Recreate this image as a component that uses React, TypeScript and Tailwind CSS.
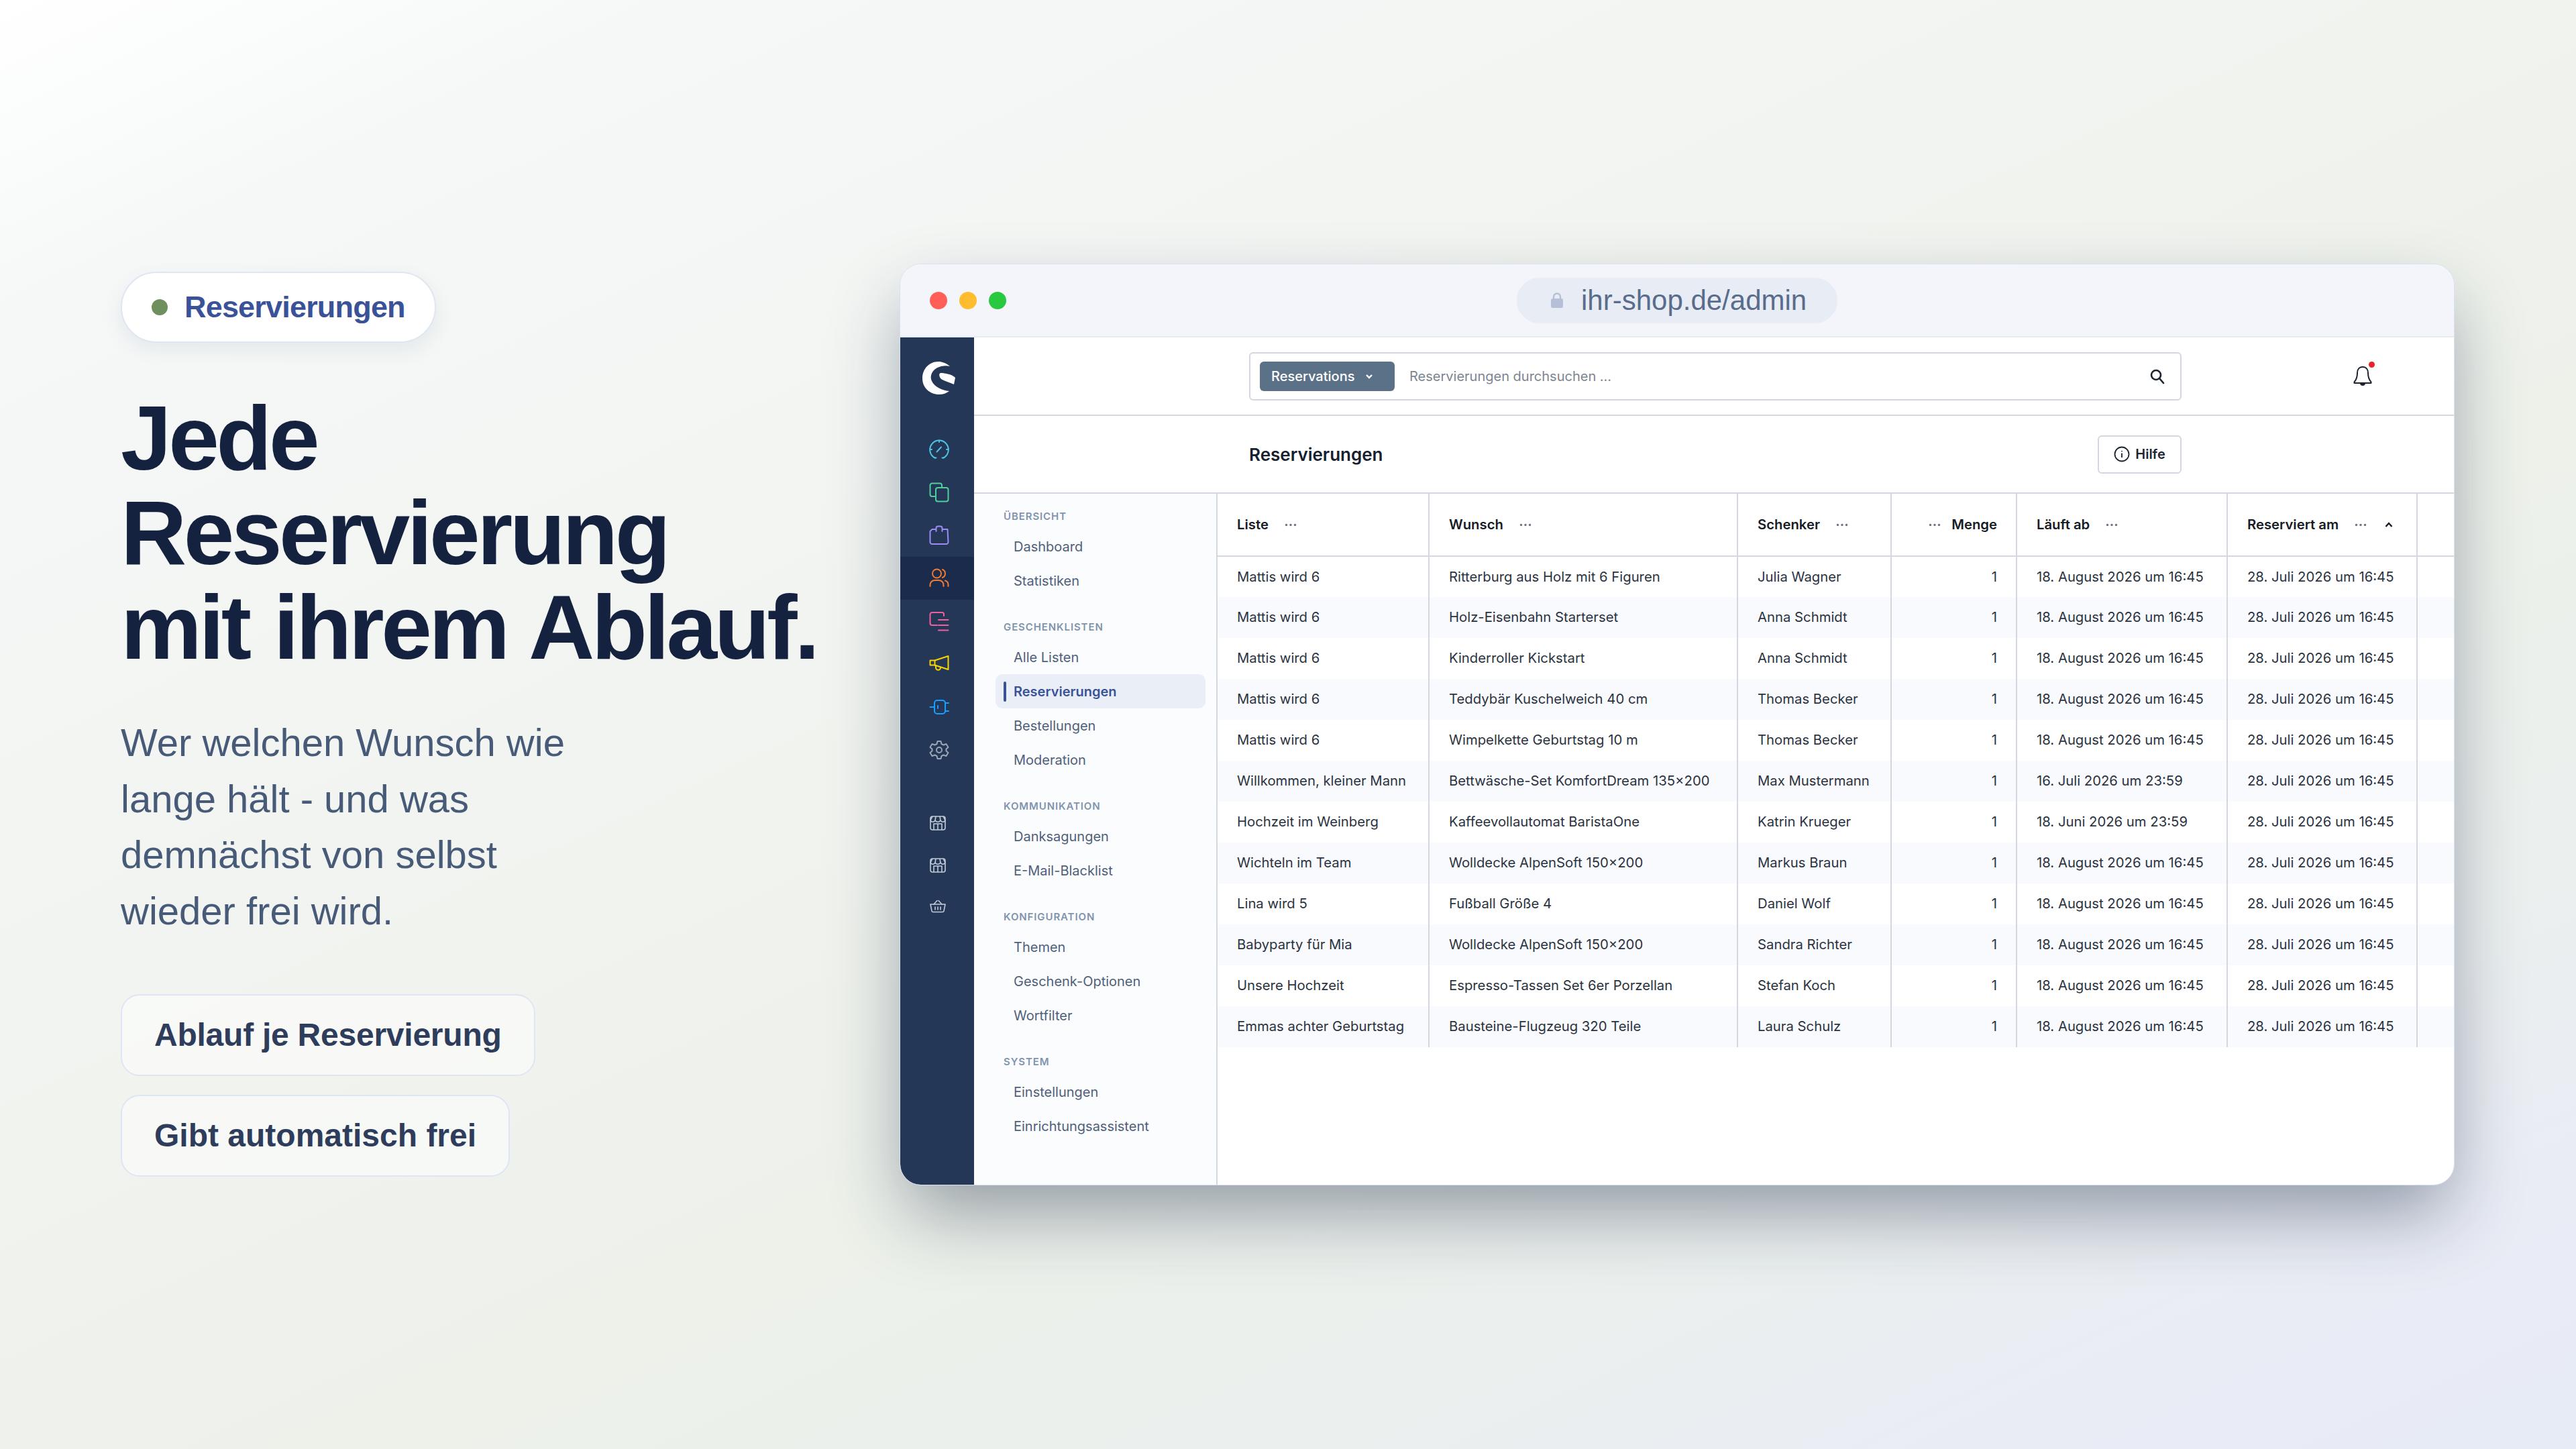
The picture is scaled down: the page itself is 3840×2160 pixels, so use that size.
import React from "react";

const sans = "font-['Liberation_Sans',Arial,sans-serif]";

const rows = [
  ["Mattis wird 6", "Ritterburg aus Holz mit 6 Figuren", "Julia Wagner", "18. August 2026 um 16:45"],
  ["Mattis wird 6", "Holz-Eisenbahn Starterset", "Anna Schmidt", "18. August 2026 um 16:45"],
  ["Mattis wird 6", "Kinderroller Kickstart", "Anna Schmidt", "18. August 2026 um 16:45"],
  ["Mattis wird 6", "Teddybär Kuschelweich 40 cm", "Thomas Becker", "18. August 2026 um 16:45"],
  ["Mattis wird 6", "Wimpelkette Geburtstag 10 m", "Thomas Becker", "18. August 2026 um 16:45"],
  ["Willkommen, kleiner Mann", "Bettwäsche-Set KomfortDream 135×200", "Max Mustermann", "16. Juli 2026 um 23:59"],
  ["Hochzeit im Weinberg", "Kaffeevollautomat BaristaOne", "Katrin Krueger", "18. Juni 2026 um 23:59"],
  ["Wichteln im Team", "Wolldecke AlpenSoft 150×200", "Markus Braun", "18. August 2026 um 16:45"],
  ["Lina wird 5", "Fußball Größe 4", "Daniel Wolf", "18. August 2026 um 16:45"],
  ["Babyparty für Mia", "Wolldecke AlpenSoft 150×200", "Sandra Richter", "18. August 2026 um 16:45"],
  ["Unsere Hochzeit", "Espresso-Tassen Set 6er Porzellan", "Stefan Koch", "18. August 2026 um 16:45"],
  ["Emmas achter Geburtstag", "Bausteine-Flugzeug 320 Teile", "Laura Schulz", "18. August 2026 um 16:45"],
];

const navGroups = [
  { title: "Übersicht", items: ["Dashboard", "Statistiken"] },
  { title: "Geschenklisten", items: ["Alle Listen", "Reservierungen", "Bestellungen", "Moderation"] },
  { title: "Kommunikation", items: ["Danksagungen", "E-Mail-Blacklist"] },
  { title: "Konfiguration", items: ["Themen", "Geschenk-Optionen", "Wortfilter"] },
  { title: "System", items: ["Einstellungen", "Einrichtungsassistent"] },
];

function Icon({ color, children }: { color: string; children: React.ReactNode }) {
  return (
    <svg width="30" height="30" viewBox="0 0 30 30" fill="none" stroke={color} strokeWidth="2" strokeLinecap="round" strokeLinejoin="round">
      {children}
    </svg>
  );
}

const railIcons = [
  <Icon color="#4fc3e0">
    <path d="M8.5 27.5A13.8 13.8 0 1 1 21.5 27.5" />
    <path d="M10.5 27.5H8.5M21.5 27.5H19.5M15 1.5V4M1.5 15H4M26 15H28.5M11.5 18.5L18 11.5" />
  </Icon>,
  <Icon color="#4fd09b">
    <path d="M9 21H4.5A3 3 0 0 1 1.5 18V4.5A3 3 0 0 1 4.5 1.5H16A3 3 0 0 1 19 4.5V8" />
    <rect x="10" y="8" width="18.5" height="20.5" rx="3" />
  </Icon>,
  <Icon color="#a08bf5">
    <path d="M10 6H4.5L1.5 9V25A3 3 0 0 0 4.5 28H25.5A3 3 0 0 0 28.5 25L27.5 6H20" />
    <path d="M10.5 9V4.5A3 3 0 0 1 13.5 1.5H16.5A3 3 0 0 1 19.5 4.5V9" />
  </Icon>,
  <Icon color="#f27a30">
    <circle cx="11.5" cy="8" r="6.5" />
    <path d="M1.5 27V25A7 7 0 0 1 8.5 18H14.5A7 7 0 0 1 21.5 25V27" />
    <path d="M20 2A6.5 6.5 0 0 1 20 14M24 18.5A6.5 6.5 0 0 1 28.5 25V27" />
  </Icon>,
  <Icon color="#f0609e">
    <path d="M22 7V4.5A2.5 2.5 0 0 0 19.5 2H4.5A3 3 0 0 0 1.5 5V18A3 3 0 0 0 4.5 21H12" />
    <path d="M14 13H28.5M14 21H28.5M14 28.5H28.5" />
  </Icon>,
  <Icon color="#f8d400">
    <path d="M8.5 9.5H1.5V16.5H8.5L28.5 23V3Z" />
    <path d="M8.5 9.5V16.5M10 17.5V20A3.5 3.5 0 0 0 17 20.5" />
  </Icon>,
  <Icon color="#189eff">
    <rect x="8" y="5" width="16" height="20" rx="4" />
    <path d="M1.5 15H8M24 9H29M24 21H29M13 13V17" />
  </Icon>,
  <Icon color="#9aa6b5">
    <circle cx="15" cy="15" r="4" />
    <path d="M12.5 2H17.5L18.5 6L21.5 7.5L25.5 6L28.5 11L25.5 13.5V16.5L28.5 19L25.5 24L21.5 22.5L18.5 24L17.5 28H12.5L11.5 24L8.5 22.5L4.5 24L1.5 19L4.5 16.5V13.5L1.5 11L4.5 6L8.5 7.5L11.5 6Z" />
  </Icon>,
];

function Store() {
  return (
    <svg width="24" height="24" viewBox="0 0 24 24" fill="none" stroke="#c3cbd6" strokeWidth="1.6" strokeLinejoin="round">
      <rect x="1" y="2" width="22" height="20" rx="3" />
      <path d="M1 8C3 11 6 11 8 8C10 11 14 11 16 8C18 11 21 11 23 8M4 2L1 8M20 2L23 8M8 8L9 2M16 8L15 2" />
      <path d="M6 22V13H18V22M12 13V22" />
    </svg>
  );
}

function Basket() {
  return (
    <svg width="24" height="20" viewBox="0 0 24 20" fill="none" stroke="#c3cbd6" strokeWidth="1.6" strokeLinejoin="round" strokeLinecap="round">
      <path d="M1 7H23L21 17A2 2 0 0 1 19 18.5H5A2 2 0 0 1 3 17Z" />
      <path d="M6 7L11 1.5M18 7L13 1.5M8 11V15M12 11V15M16 11V15" />
    </svg>
  );
}

function Dots() {
  return (
    <svg width="18" height="5" viewBox="0 0 18 5" fill="#6b7280" className="shrink-0">
      <circle cx="2.5" cy="2.5" r="1.7" />
      <circle cx="9" cy="2.5" r="1.7" />
      <circle cx="15.5" cy="2.5" r="1.7" />
    </svg>
  );
}

function Rail() {
  return (
    <div className="w-[110px] shrink-0 bg-[#243757] rounded-bl-[30px] flex flex-col items-center">
      <div className="h-[135px] w-full pt-[36px] pl-[6px] flex justify-center">
        <svg width="50" height="50" viewBox="0 0 50 50" fill="#fff">
          <path d="M41 7C35 2 29 0 24 0C10 0 0 11 0 25C0 39 11 49 25 49C31 49 36 47 40 44C30 43 18 38 14 29C10 20 16 10 28 7C33 6 37 6 41 7Z" />
          <path d="M27 17C34 17 44 19 49 24L47 34C41 31 32 29 28 26C25 23 24 18 27 17Z" />
        </svg>
      </div>
      {railIcons.map((icon, i) => (
        <div key={i} className={`w-full h-[64px] pl-[6px] flex items-center justify-center ${i === 3 ? "bg-[#1b2b4b]" : ""}`}>
          {icon}
        </div>
      ))}
      <div className="w-full pl-[44px] pt-[65px] flex flex-col gap-[39px]">
        <Store />
        <Store />
        <Basket />
      </div>
    </div>
  );
}

function SideNav() {
  return (
    <div className="w-[363px] shrink-0 bg-[#fbfcfe] border-r-2 border-[#d4d7df] pt-[23px] pl-[32px] pr-[16px]">
      {navGroups.map((group) => (
        <div key={group.title} className="mb-[33px]">
          <div className="h-[20px] mb-[10px] ml-[12px] flex items-center text-[15px] leading-none font-semibold uppercase tracking-[0.06em] text-[#7f94ad]">
            {group.title}
          </div>
          {group.items.map((item) =>
            item === "Reservierungen" ? (
              <div key={item} className="h-[51px] rounded-[10px] bg-[#eaeff7] pl-[12px] flex items-center text-[20px] font-semibold text-[#3a5298]">
                <span className="w-[4px] h-[30px] rounded-full bg-[#3a5298] mr-[11px]" />
                {item}
              </div>
            ) : (
              <div key={item} className="h-[51px] pl-[27px] flex items-center text-[20px] text-[#4f607a]">
                {item}
              </div>
            ),
          )}
        </div>
      ))}
    </div>
  );
}

function Table() {
  const head = "h-[93px] border-b-2 border-r-2 border-[#d4d7df] pl-[29px] pr-[28px] text-left font-semibold";
  const cell = "h-[61px] border-r-2 border-[#d4d7df] pl-[29px] pr-[28px] whitespace-nowrap";
  return (
    <table className="w-full table-fixed border-collapse text-[20.3px] text-[#2b3340]">
      <colgroup>
        <col className="w-[315px]" />
        <col className="w-[460px]" />
        <col className="w-[229px]" />
        <col className="w-[187px]" />
        <col className="w-[314px]" />
        <col className="w-[283px]" />
        <col />
      </colgroup>
      <thead>
        <tr className="text-[#171c26]">
          <th className={head}>
            <span className="flex items-center gap-[24px]">Liste <Dots /></span>
          </th>
          <th className={head}>
            <span className="flex items-center gap-[24px]">Wunsch <Dots /></span>
          </th>
          <th className={head}>
            <span className="flex items-center gap-[24px]">Schenker <Dots /></span>
          </th>
          <th className={head}>
            <span className="flex items-center justify-end gap-[16px]"><Dots /> Menge</span>
          </th>
          <th className={head}>
            <span className="flex items-center gap-[24px]">Läuft ab <Dots /></span>
          </th>
          <th className={head}>
            <span className="flex items-center gap-[24px]">
              Reserviert am <Dots />
              <svg width="12" height="8" viewBox="0 0 12 8" fill="none" stroke="#171c26" strokeWidth="2.4" className="ml-[3px]">
                <path d="M1.5 7L6 2L10.5 7" />
              </svg>
            </span>
          </th>
          <th className="border-b-2 border-[#d4d7df]" />
        </tr>
      </thead>
      <tbody>
        {rows.map((row, i) => (
          <tr key={i} className={i % 2 === 1 ? "bg-[#f9fafe]" : "bg-white"}>
            <td className={cell}>{row[0]}</td>
            <td className={cell}>{row[1]}</td>
            <td className={cell}>{row[2]}</td>
            <td className={`${cell} text-right`}>1</td>
            <td className={cell}>{row[3]}</td>
            <td className={cell}>28. Juli 2026 um 16:45</td>
            <td />
          </tr>
        ))}
      </tbody>
    </table>
  );
}

function AdminWindow() {
  return (
    <div className="w-[2318px] h-[1374px] flex flex-col rounded-[32px] border border-[#d9e1f1] bg-white overflow-hidden font-['Inter',sans-serif] shadow-[0_50px_110px_-10px_rgba(20,35,65,0.42)]">
      {/* browser bar */}
      <div className="h-[109px] shrink-0 bg-[#f3f5fa] border-b-2 border-[#e6eaf3] flex items-center pl-[44px]">
        <div className="flex gap-[18px] w-[875px] shrink-0">
          <span className="w-[26px] h-[26px] rounded-full bg-[#ff5f57]" />
          <span className="w-[26px] h-[26px] rounded-full bg-[#febc2e]" />
          <span className="w-[26px] h-[26px] rounded-full bg-[#28c840]" />
        </div>
        <div className={`w-[478px] h-[68px] rounded-full bg-[#e8ecf5] flex items-center pl-[51px] gap-[27px] text-[42px] text-[#5a6c8c] ${sans}`}>
          <svg width="18" height="23" viewBox="0 0 18 23" className="shrink-0">
            <path d="M4 10V6.5A5 5 0 0 1 14 6.5V10" fill="none" stroke="#b5c0d8" strokeWidth="2.4" />
            <rect y="9" width="18" height="14" rx="2.5" fill="#b5c0d8" />
          </svg>
          ihr-shop.de/admin
        </div>
      </div>

      <div className="flex-1 flex min-h-0">
        <Rail />
        <div className="flex-1 flex flex-col min-w-0">
          {/* search */}
          <div className="h-[117px] shrink-0 border-b-2 border-[#d4d7df] flex items-center pl-[410px]">
            <div className="w-[1390px] h-[72px] rounded-[6px] border-2 border-[#d4d7df] flex items-center pl-[14px] pr-[36px]">
              <div className="w-[201px] h-[44px] rounded-[6px] bg-[#5b7188] flex items-center pl-[17px] gap-[16px] text-[20px] font-medium text-white">
                Reservations
                <svg width="12" height="10" viewBox="0 0 12 10" fill="none" stroke="#fff" strokeWidth="2.4">
                  <path d="M2 3L6 7L10 3" />
                </svg>
              </div>
              <span className="ml-[22px] flex-1 text-[20px] text-[#7d8590]">Reservierungen durchsuchen ...</span>
              <svg width="24" height="24" viewBox="0 0 24 24" fill="none" stroke="#1c2430" strokeWidth="2.6" strokeLinecap="round" className="mr-[-14px]">
                <circle cx="10" cy="10" r="7" />
                <path d="M15 15L21 22" />
              </svg>
            </div>
            <div className="relative ml-[256px]">
              <svg width="28" height="32" viewBox="0 0 28 32" fill="none" stroke="#1c2430" strokeWidth="2" strokeLinejoin="round">
                <path d="M14 2C8.5 2 6 6 6 11C6 17 4.5 21 1.5 24.5V26H26.5V24.5C23.5 21 22 17 22 11C22 6 19.5 2 14 2Z" />
                <path d="M11 26A3 3 0 0 0 17 26" fill="#1c2430" />
              </svg>
              <span className="absolute -top-[6px] right-[-4px] w-[9px] h-[9px] rounded-full bg-[#e8232c]" />
            </div>
          </div>
          {/* page title */}
          <div className="h-[116px] shrink-0 border-b-2 border-[#d4d7df] flex items-center justify-between pl-[410px] pr-[406px]">
            <h2 className="text-[26px] font-semibold text-[#17202e]">Reservierungen</h2>
            <div className="w-[125px] h-[57px] rounded-[6px] border-2 border-[#d4d7df] flex items-center justify-center gap-[8px] text-[20px] font-semibold text-[#1c2430]">
              <svg width="24" height="24" viewBox="0 0 24 24" fill="none" stroke="#1c2430" strokeWidth="1.8">
                <circle cx="12" cy="12" r="10.5" />
                <path d="M12 10.5V17M12 7V8.2" />
              </svg>
              Hilfe
            </div>
          </div>
          <div className="flex-1 flex min-h-0">
            <SideNav />
            <div className="flex-1 min-w-0">
              <Table />
            </div>
          </div>
        </div>
      </div>
    </div>
  );
}

export default function App() {
  return (
    <div className="w-[3840px] h-[2160px] overflow-hidden flex bg-[linear-gradient(155deg,#ffffff_0%,#f6f8f8_12%,#f0f3ee_45%,#edf1ea_62%,#ebefee_78%,#e9ecf5_90%,#e7ebf6_100%)]">
      {/* pitch column */}
      <div className={`w-[1341px] shrink-0 pl-[180px] pt-[405px] ${sans}`}>
        <div className="inline-flex items-center h-[106px] px-[44px] gap-[25px] rounded-full bg-white border-2 border-[#dfe6f3] shadow-[0_10px_30px_rgba(30,50,90,0.08)]">
          <span className="w-[24px] h-[24px] rounded-full bg-[#6f8f5f]" />
          <span className="text-[45px] font-bold tracking-[-0.018em] text-[#3a5298]">Reservierungen</span>
        </div>
        <h1 className="mt-[72px] text-[136px] leading-[141px] font-bold tracking-[-0.033em] [word-spacing:4px] text-[#14223f]">
          Jede
          <br />
          Reservierung
          <br />
          mit ihrem Ablauf.
        </h1>
        <p className="mt-[59px] text-[58px] leading-[83.5px] text-[#475a78]">
          Wer welchen Wunsch wie
          <br />
          lange hält - und was
          <br />
          demnächst von selbst
          <br />
          wieder frei wird.
        </p>
        <div className="mt-[83px] flex flex-col items-start gap-[28px]">
          <div className="h-[122px] flex items-center px-[48px] rounded-[28px] border-2 border-[#dfe6f3] bg-white/50 text-[48px] font-bold tracking-[-0.005em] text-[#2e3d5c]">
            Ablauf je Reservierung
          </div>
          <div className="h-[122px] flex items-center px-[48px] rounded-[28px] border-2 border-[#dfe6f3] bg-white/50 text-[48px] font-bold text-[#2e3d5c]">
            Gibt automatisch frei
          </div>
        </div>
      </div>
      {/* product window */}
      <div className="pt-[393px]">
        <AdminWindow />
      </div>
    </div>
  );
}
